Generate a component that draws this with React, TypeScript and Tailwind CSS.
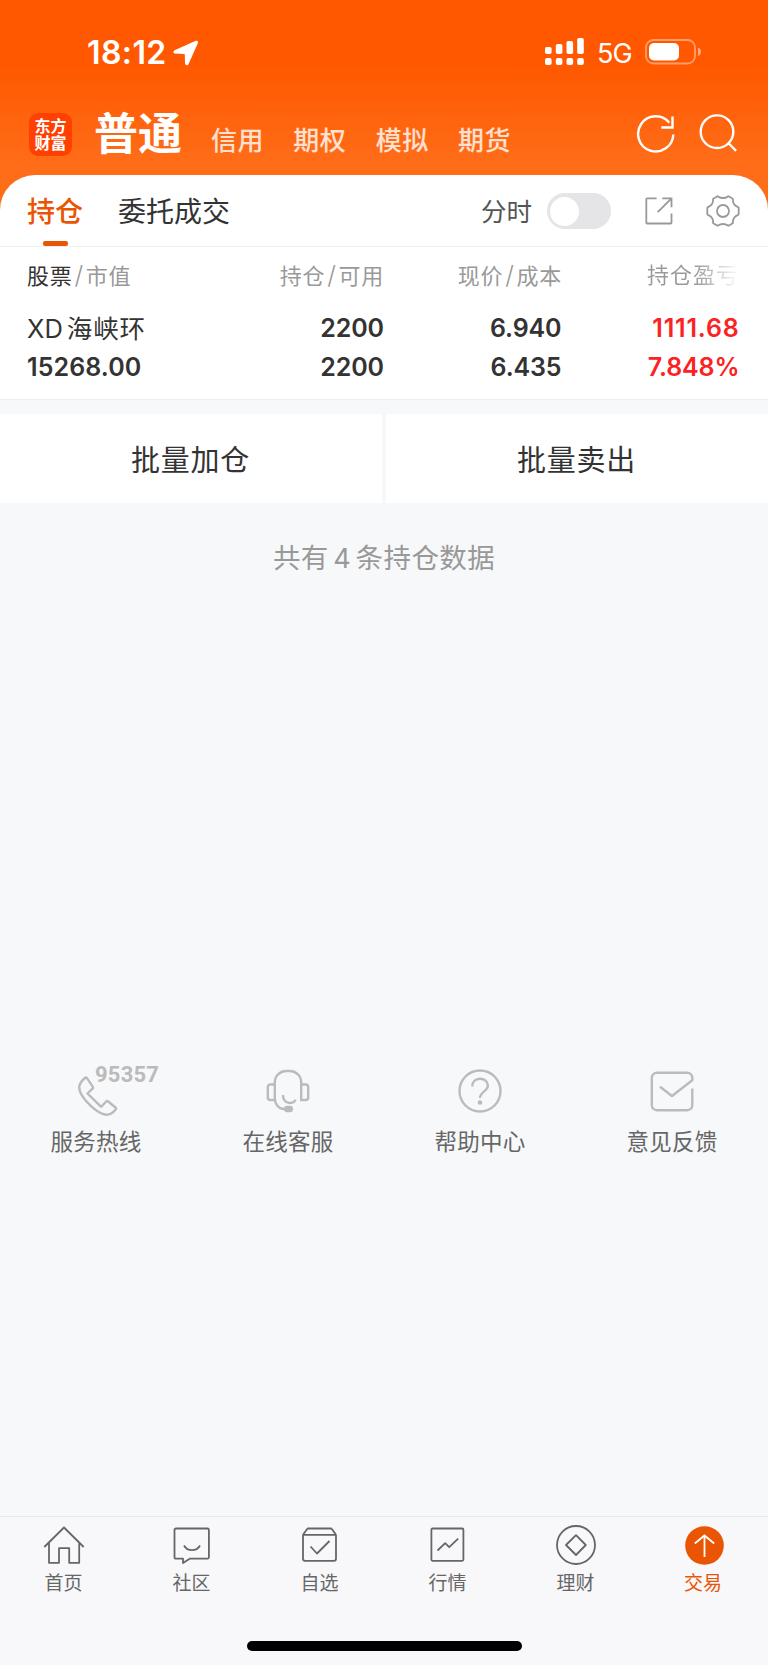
import React from 'react';

interface IconProps {
  className?: string;
}

interface TabItem {
  label: string;
  icon: React.ReactNode;
  active?: boolean;
}

/* --- Status bar icons --- */
const LocationIcon = () => (
  <svg width="26" height="26" viewBox="0 0 26 26" fill="#fff">
    <path d="M22.800.8 1.600 10.300C-.2 11.200.2 13.500 2.200 13.600l8.600.3c.7 0 1 .3 1 1l.2 8.300c.1 2.300 2.700 2.700 3.600.7L24.900 3C25.500 1.400 24.300.2 22.800.8Z" />
  </svg>
);

const SignalIcon = () => (
  <svg width="39" height="27" viewBox="0 0 39 27" fill="#fff">
    <rect x="0" y="9" width="6.600" height="7" rx="1.800" />
    <rect x="10.800" y="6" width="6.600" height="10" rx="1.800" />
    <rect x="21.500" y="3" width="6.600" height="13" rx="1.800" />
    <rect x="32.200" y="0" width="6.600" height="16" rx="1.800" />
    <rect x="0" y="20" width="6.600" height="7" rx="2" />
    <rect x="10.800" y="20" width="6.600" height="7" rx="2" />
    <rect x="21.500" y="20" width="6.600" height="7" rx="2" />
    <rect x="32.200" y="20" width="6.600" height="7" rx="2" />
  </svg>
);

const BatteryIcon = () => (
  <svg width="56" height="26" viewBox="0 0 56 26" fill="none">
    <rect x="1" y="1" width="49" height="23.500" rx="7.500" stroke="#fff" strokeOpacity=".42" strokeWidth="1.800" />
    <rect x="4" y="4" width="30" height="17.500" rx="5" fill="#fff" />
    <path d="M53 8.500c4 1.500 4 7 0 8.500Z" fill="#fff" fillOpacity=".5" />
  </svg>
);

/* --- Header icons --- */
const RefreshIcon = () => (
  <svg width="40" height="40" viewBox="0 0 40 40" fill="none" stroke="#fff" strokeWidth="2.400">
    <path d="M37.300 20.500A17.600 17.600 0 1 1 33.300 8.700" />
    <path d="M36.500 2.500v11H25.300" />
  </svg>
);

const SearchIcon = () => (
  <svg width="40" height="40" viewBox="0 0 40 40" fill="none" stroke="#fff" strokeWidth="2.400">
    <circle cx="18" cy="17.700" r="16.300" />
    <path d="m28.800 28.500 8.300 8.400" />
  </svg>
);

const ShareIcon = () => (
  <svg width="28" height="28" viewBox="0 0 28 28" fill="none" stroke="#999" strokeWidth="1.800">
    <path d="M11.600 1.300H2.100a.8.8 0 0 0-.8.800v23.600c0 .5.300.800.800.800h23.600c.5 0 .800-.300.800-.800V16.500" />
    <path d="M17.300 1.300h9.200v9M26.500 1.300 12.700 15.200" />
  </svg>
);

const GearIcon = () => (
  <svg width="34" height="34" viewBox="0 0 34 34" fill="none" stroke="#999" strokeWidth="1.800" strokeLinejoin="round">
    <path d="M11.500 2.200c1 0 1.400 1.800 5.500 1.800s4.500-1.800 5.500-1.800l4.300 2.500c.6.900-.7 2.500 1.200 5.300 1.800 2.900 4.200 2.300 4.700 3.800v6.400c-.5 1.500-2.900.9-4.700 3.800-1.900 2.800-.6 4.400-1.200 5.300l-4.300 2.500c-1 0-1.400-1.800-5.500-1.800s-4.500 1.800-5.500 1.800l-4.300-2.500c-.6-.9.700-2.500-1.200-5.300-1.800-2.900-4.200-2.300-4.700-3.800v-6.400C1.800 12.300 4.200 12.900 6 10c1.900-2.800.6-4.400 1.200-5.300Z" />
    <circle cx="17" cy="17" r="6" />
  </svg>
);

/* --- Service icons --- */
const PhoneIcon = ({ className }: IconProps) => (
  <svg className={className} width="40" height="40" viewBox="0 0 40 40" fill="none" stroke="#bbb" strokeWidth="2.400" strokeLinejoin="round">
    <path d="M7.200 1.800C4.500 4 1.900 6.900 1.300 10.500c-.6 5 4 12.300 11.200 19.200 5.500 5.200 10.800 8.600 15.500 9 4 .3 7.400-2.300 9.700-5.100.6-.8.500-1.500-.2-2.100l-7.300-6c-.9-.7-1.500-.6-2.200.2l-4.800 5.100L9.500 17.500l5-4.800c.7-.6.8-1.200.2-2L9 2.200c-.5-.8-1.100-1-1.800-.4Z" />
  </svg>
);

const HeadsetIcon = () => (
  <svg width="44" height="44" viewBox="0 0 44 44" fill="none" stroke="#bbb" strokeWidth="2.400">
    <path d="M18 40c-5.500 0-9.200-5-9.200-11V13.500C8.800 6.500 14.500 2 20 2h4c5.500 0 11.200 4.500 11.200 11.500V31h4.300c1.600 0 2.700-1 2.700-2.600V18.100c0-1.600-1.100-2.600-2.700-2.600h-4.300M8.800 15.500H4.500c-1.600 0-2.700 1-2.700 2.600v10.300c0 1.600 1.100 2.600 2.700 2.600h4.300" />
    <path d="M17 26c.3 10 11 9.500 12.500 4.600" />
    <rect x="18" y="36.800" width="9" height="6.400" rx="3" fill="#bbb" stroke="none" />
  </svg>
);

const HelpIcon = () => (
  <svg width="44" height="44" viewBox="0 0 44 44" fill="none" stroke="#bbb" strokeWidth="2.400">
    <circle cx="22" cy="22" r="20.500" />
    <path d="M14.300 17.500c0-4.500 3-7.700 7.700-7.700 4.500 0 7.900 2.800 7.900 6.900 0 5.400-7.900 6-7.900 12.300" />
    <circle cx="22" cy="33.500" r="2.300" fill="#bbb" stroke="none" />
  </svg>
);

const MailIcon = () => (
  <svg width="44" height="44" viewBox="0 0 44 44" fill="none" stroke="#bbb" strokeWidth="2.400" strokeLinejoin="round">
    <path d="M42.300 19.500V36c0 3-2.200 5.200-5.200 5.200H7c-3 0-5.200-2.200-5.200-5.200V9c0-3 2.200-5.200 5.200-5.200h30.100c3 0 5.200 2.200 5.200 5.200v2.200L22 27 10 17.700" />
  </svg>
);

/* --- Bottom tab icons --- */
const HomeIcon = () => (
  <svg width="42" height="42" viewBox="0 0 42 42" fill="none" stroke="#666" strokeWidth="1.800" strokeLinejoin="round">
    <path d="M1.300 22 21 2.500 40.700 22M6 17.500v20.300h10V23.200h10.200v14.600h10V17.500" />
  </svg>
);

const CommunityIcon = () => (
  <svg width="42" height="42" viewBox="0 0 42 42" fill="none" stroke="#666" strokeWidth="1.800" strokeLinejoin="round">
    <path d="M5 3.500h31.400c.9 0 1.500.6 1.500 1.500v27.200c0 .9-.6 1.500-1.500 1.500H18.700L12 38v-4.300H5c-.9 0-1.500-.6-1.500-1.500V5c0-.9.600-1.500 1.500-1.500Z" />
    <path d="M13 20.500c3.500 6.300 12.500 6.300 16 0" />
  </svg>
);

const WatchlistIcon = () => (
  <svg width="42" height="42" viewBox="0 0 42 42" fill="none" stroke="#666" strokeWidth="1.800" strokeLinejoin="round">
    <path d="M4 9.800v24c0 1.200.8 2 2 2h29c1.200 0 2-.8 2-2v-24M4 9.800h33M4 9.800l4-5.600c.3-.5.700-.7 1.300-.7h22.400c.6 0 1 .2 1.300.7l4 5.600" />
    <path d="m11.500 21.500 6.500 7 12.500-12.500" />
  </svg>
);

const MarketIcon = () => (
  <svg width="42" height="42" viewBox="0 0 42 42" fill="none" stroke="#666" strokeWidth="1.800" strokeLinejoin="round">
    <rect x="4.400" y="3.500" width="32" height="32.300" rx="1.200" />
    <path d="m10.500 25.500 7.700-7.300 4 4 9-8.500" />
  </svg>
);

const WealthIcon = () => (
  <svg width="42" height="42" viewBox="0 0 42 42" fill="none" stroke="#666" strokeWidth="1.800" strokeLinejoin="round">
    <circle cx="21" cy="20" r="19" />
    <path d="M21 10.200 30.800 20 21 30 11 20Z" />
  </svg>
);

const TradeIcon = () => (
  <svg width="42" height="42" viewBox="0 0 42 42" fill="none" stroke="#fff" strokeWidth="1.800">
    <circle cx="21.500" cy="20.500" r="19.300" fill="#ea5504" stroke="none" />
    <path d="M21.500 32V11M11.800 18.500l9.700-8 9.700 8" />
  </svg>
);

const accounts = ['信用', '期权', '模拟', '期货'];

const services = [
  { label: '服务热线', icon: <PhoneIcon className="ml-[3px] mt-[7px]" />, hotline: '95357' },
  { label: '在线客服', icon: <HeadsetIcon /> },
  { label: '帮助中心', icon: <HelpIcon /> },
  { label: '意见反馈', icon: <MailIcon /> },
];

const tabs: TabItem[] = [
  { label: '首页', icon: <HomeIcon /> },
  { label: '社区', icon: <CommunityIcon /> },
  { label: '自选', icon: <WatchlistIcon /> },
  { label: '行情', icon: <MarketIcon /> },
  { label: '理财', icon: <WealthIcon /> },
  { label: '交易', icon: <TradeIcon />, active: true },
];

const StatusBar = () => (
  <div className="flex h-[106px] items-start pl-[87px] pr-[67px] pt-[36px] text-white">
    <span className="w-[86px] whitespace-nowrap text-[32px] font-semibold leading-[33px] tracking-[0.4px]">18:12</span>
    <span className="mt-[4px]"><LocationIcon /></span>
    <div className="ml-auto flex items-start">
      <span className="mt-[2px]"><SignalIcon /></span>
      <span className="ml-[13px] w-[48px] text-[27px] leading-[36px] tracking-[-0.8px]">5G</span>
      <span className="mt-[3px]"><BatteryIcon /></span>
    </div>
  </div>
);

const Header = () => (
  <div className="flex h-[69px] pl-[29px] pr-[29px] text-white">
    <div className="mt-[7px] flex h-[43px] w-[43px] flex-col items-center justify-center rounded-[9px] bg-[#ff4000] text-[16px] font-bold leading-[17px]">
      <span>东方</span>
      <span>财富</span>
    </div>
    <h1 className="ml-[22px] w-[117px] whitespace-nowrap text-[44px] font-bold leading-[57px]">普通</h1>
    <nav className="flex gap-[29.300px] pt-[18px] text-[26px] font-medium leading-[34px] tracking-[0.5px] text-white/80">
      {accounts.map(name => (
        <span key={name}>{name}</span>
      ))}
    </nav>
    <div className="ml-auto flex gap-[23px] pt-[8px]">
      <RefreshIcon />
      <SearchIcon />
    </div>
  </div>
);

const Slash = () => <span className="ml-[2px] mr-[2px] text-[25px] font-light">/</span>;

const Positions = () => (
  <section className="h-[225px] border-b border-[#eeeff1] bg-white rounded-t-[35px]">
    <div className="flex h-[72px] items-start border-b border-[#eeeff1] pl-[27px] pr-[28px] text-[28px]">
      <div className="flex flex-col items-center font-medium text-[#ea5504]">
        <span className="pt-[18px] leading-[38px]">持仓</span>
        <span className="mt-[10px] h-[5px] w-[25px] rounded-[2px] bg-[#ea5504]" />
      </div>
      <span className="ml-[35px] pt-[18px] leading-[38px] text-[#333]">委托成交</span>
      <span className="ml-auto pt-[18px] text-[25.500px] leading-[38px] text-[#555]">分时</span>
      <div className="ml-[15px] mt-[18px] flex h-[36px] w-[64px] items-center rounded-full bg-[#e5e5e7] pl-[3px]">
        <span className="h-[29px] w-[29px] rounded-full bg-white" />
      </div>
      <span className="ml-[34px] mt-[22px]"><ShareIcon /></span>
      <span className="ml-[33px] mt-[19px]"><GearIcon /></span>
    </div>

    <div className="grid grid-cols-[200px_157px_178px_1fr] pl-[27px] pr-[29px] pt-[11px] text-right text-[22px] leading-[34px] tracking-[0.7px] text-[#999]">
      <span className="text-left"><span className="text-[#333]">股票</span><Slash />市值</span>
      <span>持仓<Slash />可用</span>
      <span>现价<Slash />成本</span>
      <span className="bg-linear-to-r from-[#999] from-75% to-white bg-clip-text text-transparent tracking-[1px]">持仓盈亏</span>
    </div>

    <div className="grid grid-cols-[200px_157px_177.500px_1fr] pl-[27px] pr-[28.500px] pt-[16px] text-right text-[25px] font-semibold leading-[39px] tracking-[-0.100px] text-[#333]">
      <span className="text-left text-[25.500px] font-normal tracking-[0.9px]"><span className="mr-[1px] tracking-normal">XD</span><span className="ml-[3px]">海峡环</span></span>
      <span>2200</span>
      <span>6.940</span>
      <span className="tracking-[0.8px] text-[#fa2222]">1111.68</span>
      <span className="text-left tracking-[0.1px]">15268.00</span>
      <span>2200</span>
      <span>6.435</span>
      <span className="text-[#fa2222]">7.848%</span>
    </div>
  </section>
);

const App: React.FC = () => {
  return (
    <div className="flex h-[1665px] w-[768px] flex-col overflow-hidden bg-[#f7f8fa] font-['Inter','Noto_Sans_CJK_SC',sans-serif]">
      <div className="bg-[linear-gradient(#ff5800_0px,#ff5800_65px,#ff6d19_165px,#ff6d19_100%)] bg-[length:100%_215px] bg-no-repeat">
        <StatusBar />
        <Header />
        <Positions />
      </div>

      {/* --- Batch actions --- */}
      <div className="mt-[14px] grid h-[89px] grid-cols-2 gap-[4px] text-center text-[29px] leading-[85px] tracking-[0.7px] text-[#333]">
        <button className="bg-white pr-[1px] pt-[4px]">批量加仓</button>
        <button className="bg-white pr-[1px] pt-[4px]">批量卖出</button>
      </div>
      <p className="mt-[35px] text-center text-[27.500px] leading-[40px] tracking-[0.4px] text-[#999]">
        共有<span className="mx-[4.500px] text-[27px]">4</span>条持仓数据
      </p>

      {/* --- Services --- */}
      <div className="mt-[490px] grid grid-cols-4">
        {services.map(item => (
          <div key={item.label} className="relative flex flex-col items-center">
            <div className="flex h-[44px] items-start">{item.icon}</div>
            {item.hotline && (
              <span className="absolute left-[95px] top-[-7px] font-['Roboto'] text-[22px] font-bold leading-[26px] tracking-[0.2px] text-[#bbb]">{item.hotline}</span>
            )}
            <span className="mt-[12px] text-[22.500px] leading-[33px] tracking-[0.3px] text-[#666]">{item.label}</span>
          </div>
        ))}
      </div>

      {/* --- Bottom tabs --- */}
      <footer className="mt-auto h-[149px] border-t border-[#e6ebed] bg-[#f8f8fb] pt-[8px]">
        <div className="grid grid-cols-6">
          {tabs.map(tab => (
            <div key={tab.label} className="flex flex-col items-center">
              {tab.icon}
              <span className={tab.active ? 'mr-[2px] mt-[2px] text-[19px] leading-[29px] text-[#ea5504]' : 'mr-[1px] mt-[2px] text-[19px] leading-[29px] text-[#666]'}>{tab.label}</span>
            </div>
          ))}
        </div>
        <div className="mx-auto mt-[43px] h-[10px] w-[275px] rounded-full bg-black" />
      </footer>
    </div>
  );
};

export default App;
